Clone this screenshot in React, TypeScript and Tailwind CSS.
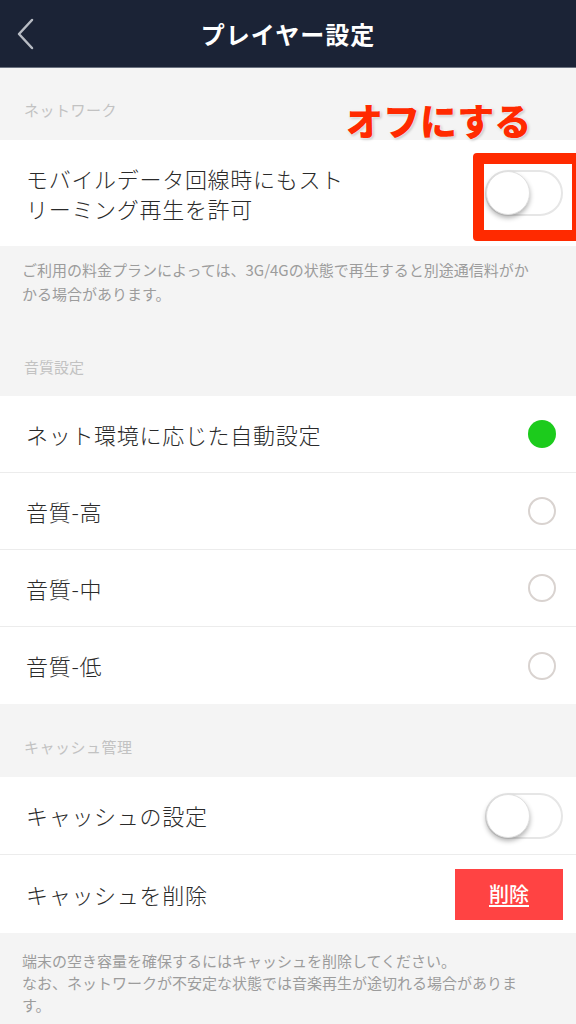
import React from "react";

const font = { fontFamily: '"Noto Sans CJK JP", "Noto Sans", sans-serif' };

function Toggle() {
  return (
    <div className="relative w-[78px] h-[46px] rounded-full bg-white border-[2px] border-[#e6e6e6]">
      <div className="absolute left-[-1px] top-[-1px] w-[44px] h-[44px] rounded-full bg-white shadow-[0_3px_5px_rgba(0,0,0,0.3)] border border-[#e0e0e0]" />
    </div>
  );
}

function Radio({ on }: { on?: boolean }) {
  return on ? (
    <div className="w-[28px] h-[28px] rounded-full bg-[#1ccb1c]" />
  ) : (
    <div className="w-[28px] h-[28px] rounded-full border-[2px] border-[#d9d3d0]" />
  );
}

function SectionLabel({ children, h }: { children: React.ReactNode; h: string }) {
  return (
    <div className={`flex items-end bg-[#f4f4f4] px-[24px] pb-[20px] ${h}`}>
      <span className="text-[15px] leading-[20px] text-[#c2c2c2] tracking-[0.5px]">{children}</span>
    </div>
  );
}

function RadioRow({ label, on, border }: { label: string; on?: boolean; border?: boolean }) {
  return (
    <div className={`flex items-center justify-between bg-white h-[77px] pl-[26px] pr-[20px] ${border ? "border-b border-[#ececec]" : ""}`}>
      <span className="text-[22px] font-light tracking-[0.7px] text-[#2a2a2a]">{label}</span>
      <Radio on={on} />
    </div>
  );
}

export default function App() {
  return (
    <div className="relative w-[576px] h-[1024px] overflow-hidden bg-[#f4f4f4]" style={font}>
      {/* Header */}
      <div className="relative flex items-center justify-center h-[68px] bg-[#1b2336] border-b border-[#6b7280]">
        <svg className="absolute left-[16px] top-[18px]" width="20" height="32" viewBox="0 0 20 32">
          <path d="M16 2 L3 16 L16 30" stroke="#b8bcc4" strokeWidth="2.5" fill="none" strokeLinecap="round" strokeLinejoin="round" />
        </svg>
        <span className="text-white text-[24px] font-bold tracking-[1px]">プレイヤー設定</span>
      </div>

      <SectionLabel h="h-[72px]">ネットワーク</SectionLabel>

      <div className="flex items-center justify-between bg-white h-[106px] pl-[26px] pr-[13px]">
        <div className="text-[22px] font-light leading-[30px] tracking-[0.7px] text-[#2a2a2a] w-[330px]">
          モバイルデータ回線時にもストリーミング再生を許可
        </div>
        <Toggle />
      </div>

      <div className="bg-[#f4f4f4] h-[150px] px-[22px] pt-[12px] flex flex-col">
        <p className="text-[15px] leading-[24px] text-[#9c9c9c] w-[520px]">
          ご利用の料金プランによっては、3G/4Gの状態で再生すると別途通信料がかかる場合があります。
        </p>
        <div className="mt-auto pb-[18px] pl-[2px]">
          <span className="text-[15px] leading-[20px] text-[#c2c2c2]">音質設定</span>
        </div>
      </div>

      <RadioRow label="ネット環境に応じた自動設定" on border />
      <RadioRow label="音質-高" border />
      <RadioRow label="音質-中" border />
      <RadioRow label="音質-低" />

      <SectionLabel h="h-[73px]">キャッシュ管理</SectionLabel>

      <div className="flex items-center justify-between bg-white h-[78px] pl-[26px] pr-[13px] border-b border-[#ececec]">
        <span className="text-[22px] font-light tracking-[0.7px] text-[#2a2a2a]">キャッシュの設定</span>
        <Toggle />
      </div>
      <div className="flex items-center justify-between bg-white h-[78px] pl-[26px] pr-[13px]">
        <span className="text-[22px] font-light tracking-[0.7px] text-[#2a2a2a]">キャッシュを削除</span>
        <div className="flex items-center justify-center w-[108px] h-[51px] bg-[#ff4343]">
          <span className="text-white text-[20px] font-medium underline underline-offset-[3px]">削除</span>
        </div>
      </div>

      <div className="px-[22px] pt-[17px]">
        <p className="text-[15px] leading-[22px] text-[#9c9c9c] w-[520px]">
          端末の空き容量を確保するにはキャッシュを削除してください。
          <br />
          なお、ネットワークが不安定な状態では音楽再生が途切れる場合があります。
        </p>
      </div>

      {/* Annotation overlays */}
      <div
        className="absolute left-[346px] top-[98px] text-[37px] leading-[44px] font-black text-[#ff2a00]"
        style={{ textShadow: "0 0 2px #fff, 0 0 3px #fff, 1px 1px 3px rgba(0,0,0,0.35)" }}
      >
        オフにする
      </div>
      <div className="absolute left-[473px] top-[153px] w-[110px] h-[88px] border-[11px] border-[#ff2a00] rounded-[4px]" />
    </div>
  );
}
